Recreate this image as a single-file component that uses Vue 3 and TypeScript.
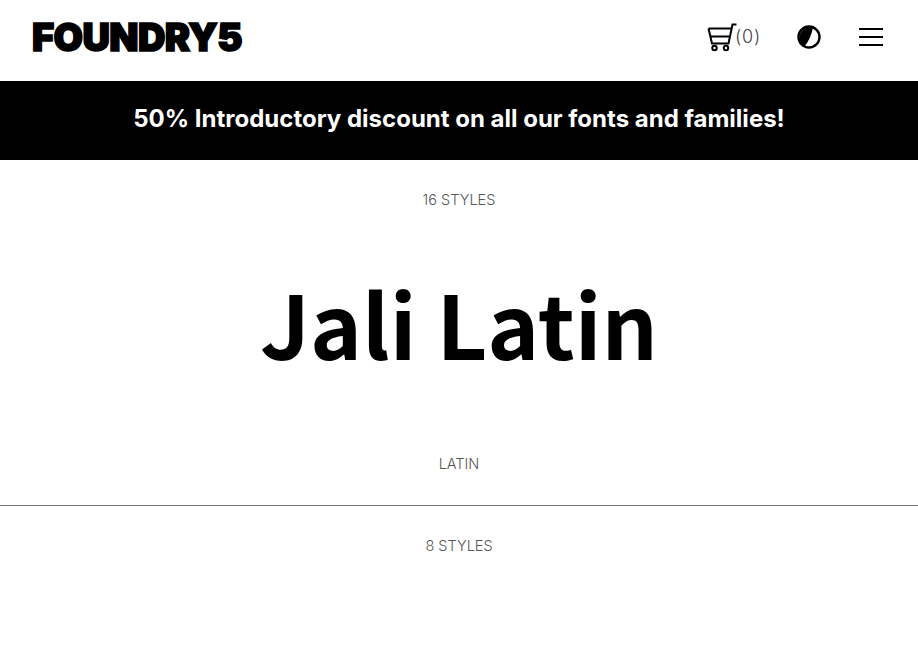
<script setup lang="ts">
const banner = '50% Introductory discount on all our fonts and families!'
</script>

<template>
  <div class="page">
    <header class="top">
      <div class="logo">FOUNDRY5</div>
      <nav class="tools">
        <div class="cart">
          <svg class="cart-icon" width="30" height="30" viewBox="0 0 30 30" fill="none" stroke="#000" stroke-width="2">
            <path d="M1.5 6.5H24" />
            <path d="M1.5 6.5L5 21.5H21.5L25.5 2.5H29.5" />
            <path d="M3.5 14.5H23" />
            <circle cx="7.5" cy="26" r="2.2" />
            <circle cx="19" cy="26" r="2.2" />
          </svg>
          <span class="count">(0)</span>
        </div>
        <svg class="contrast" width="24" height="24" viewBox="0 0 24 24">
          <circle cx="12" cy="12" r="10.5" fill="#fff" stroke="#000" stroke-width="2.4" />
          <path d="M16 2.5A10.5 10.5 0 0 0 7.5 21.5C12 16 14.5 10 16 2.5Z" fill="#000" />
        </svg>
        <div class="burger"><span></span><span></span><span></span></div>
      </nav>
    </header>
    <div class="banner">{{ banner }}</div>
    <section class="family">
      <div class="meta">16 STYLES</div>
      <h1 class="title">Jali Latin</h1>
      <div class="meta">LATIN</div>
    </section>
    <section class="next">
      <div class="meta">8 STYLES</div>
    </section>
  </div>
</template>

<style scoped>
.page {
  height: 656px;
  background: #fff;
  overflow: hidden;
  font-family: Inter, "Liberation Sans", sans-serif;
}
.top {
  height: 81px;
  box-sizing: border-box;
  padding: 0 35px 7px 32px;
  display: flex;
  align-items: center;
  justify-content: space-between;
}
.logo {
  font-family: Inter, sans-serif;
  font-weight: 900;
  font-size: 38px;
  line-height: 40px;
  letter-spacing: -0.6px;
  color: #000;
  -webkit-text-stroke: 1.6px #000;
}
.tools {
  display: flex;
  align-items: center;
}
.cart {
  display: flex;
  align-items: center;
}
.cart-icon {
  margin-right: -2px;
}
.count {
  font-size: 18px;
  font-weight: 300;
  color: #444;
  letter-spacing: 0.8px;
  margin-bottom: 1px;
}
.contrast {
  margin-left: 36px;
}
.burger {
  margin-left: 38px;
  width: 24px;
  display: flex;
  flex-direction: column;
  gap: 6px;
}
.burger span {
  height: 2px;
  background: #000;
}
.banner {
  height: 79px;
  box-sizing: border-box;
  padding-bottom: 4px;
  background: #000;
  color: #fff;
  display: flex;
  align-items: center;
  justify-content: center;
  font-weight: 700;
  font-size: 24px;
}
.family {
  height: 345px;
  border-bottom: 1px solid #777;
  display: flex;
  flex-direction: column;
  align-items: center;
}
.meta {
  margin-top: 31px;
  font-size: 14.5px;
  line-height: 18px;
  font-weight: 300;
  color: #555;
}
.title {
  margin: 48px 0 0;
  font-family: "Noto Sans CJK SC", "Noto Sans", sans-serif;
  font-weight: 700;
  font-size: 88px;
  line-height: 130px;
  color: #000;
}
.family .title + .meta {
  margin-top: 68px;
}
.next {
  display: flex;
  justify-content: center;
}
</style>
